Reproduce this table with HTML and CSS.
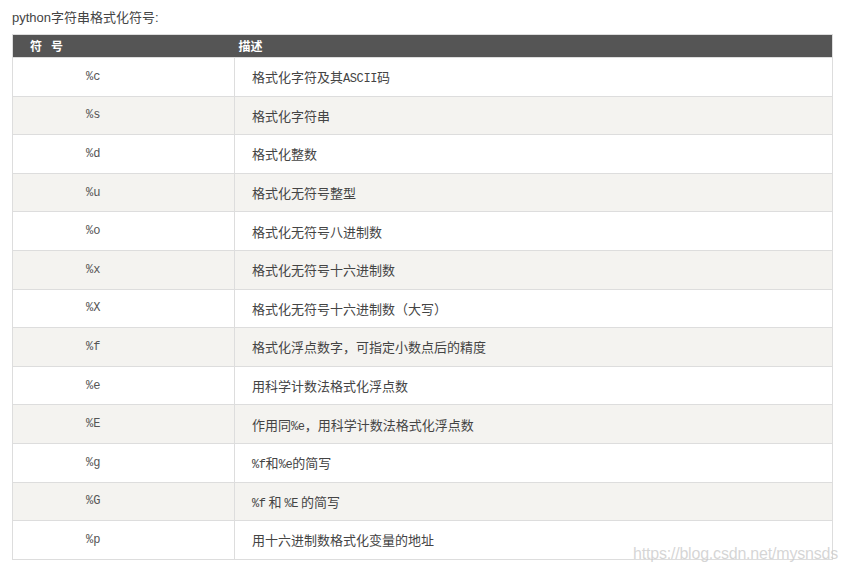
FILE: index.html
```html
<!DOCTYPE html>
<html>
<head>
<meta charset="utf-8">
<link rel="stylesheet" href="styles.css">
</head>
<body>
<div class="page">
  <p class="title">python字符串格式化符号:</p>
  <table class="fmt">
    <thead>
      <tr><th class="c1">符<span class="gap"></span>号</th><th class="c2">描述</th></tr>
    </thead>
    <tbody>
      <tr><td class="code">%c</td><td class="desc">格式化字符及其<span class="mono">ASCII</span>码</td></tr>
      <tr><td class="code">%s</td><td class="desc">格式化字符串</td></tr>
      <tr><td class="code">%d</td><td class="desc">格式化整数</td></tr>
      <tr><td class="code">%u</td><td class="desc">格式化无符号整型</td></tr>
      <tr><td class="code">%o</td><td class="desc">格式化无符号八进制数</td></tr>
      <tr><td class="code">%x</td><td class="desc">格式化无符号十六进制数</td></tr>
      <tr><td class="code">%X</td><td class="desc">格式化无符号十六进制数（大写）</td></tr>
      <tr><td class="code">%f</td><td class="desc">格式化浮点数字，可指定小数点后的精度</td></tr>
      <tr><td class="code">%e</td><td class="desc">用科学计数法格式化浮点数</td></tr>
      <tr><td class="code">%E</td><td class="desc">作用同<span class="mono">%e</span>，用科学计数法格式化浮点数</td></tr>
      <tr><td class="code">%g</td><td class="desc"><span class="mono">%f</span>和<span class="mono">%e</span>的简写</td></tr>
      <tr><td class="code">%G</td><td class="desc"><span class="mono">%f</span> 和 <span class="mono">%E</span> 的简写</td></tr>
      <tr><td class="code">%p</td><td class="desc">用十六进制数格式化变量的地址</td></tr>
    </tbody>
  </table>
  <div class="watermark">https://blog.csdn.net/mysnsds</div>
</div>
</body>
</html>
```
FILE: styles.css
```css
html, body {
  margin: 0;
  padding: 0;
  background: #fff;
}
.page {
  position: relative;
  width: 849px;
  height: 574px;
  padding: 10px 0 0 12px;
  box-sizing: border-box;
  font-family: "Liberation Sans", "Noto Sans CJK SC", sans-serif;
}
.title {
  margin: 0 0 8px 0;
  font-size: 13px;
  line-height: 16px;
  color: #444;
}
.fmt {
  width: 821px;
  border-collapse: collapse;
  table-layout: fixed;
  border: 1px solid #ddd;
}
.fmt th {
  background: #555;
  color: #fff;
  font-size: 12px;
  font-weight: bold;
  height: 22px;
  padding: 0;
  text-align: left;
  font-family: "Noto Sans CJK SC", sans-serif;
  line-height: 14px;
}
.gap {
  display: inline-block;
  width: 9px;
}
.fmt th.c1 {
  width: 222px;
  padding-left: 17px;
  box-sizing: border-box;
}
.fmt th.c2 {
  padding-left: 4px;
}
.fmt td {
  height: 37.6px;
  padding: 0;
  border-top: 1px solid #ddd;
  color: #444;
}
.fmt tbody tr:nth-child(even) td {
  background: #f4f3f0;
}
.fmt td.code {
  text-align: left;
  padding-left: 73px;
  border-right: 1px solid #ddd;
  font-family: "Liberation Mono", "DejaVu Sans Mono", monospace;
  font-size: 12px;
  color: #555;
}
.fmt td.desc {
  padding-left: 17px;
  font-family: "Noto Sans CJK SC", sans-serif;
  font-size: 13px;
}
.mono {
  font-family: "Liberation Mono", monospace;
  font-size: 12px;
  letter-spacing: -0.4px;
}
.watermark {
  position: absolute;
  left: 633px;
  top: 545px;
  font-family: "Liberation Sans", sans-serif;
  font-size: 16px;
  color: rgba(200, 200, 200, 0.75);
  letter-spacing: -0.2px;
}
```
